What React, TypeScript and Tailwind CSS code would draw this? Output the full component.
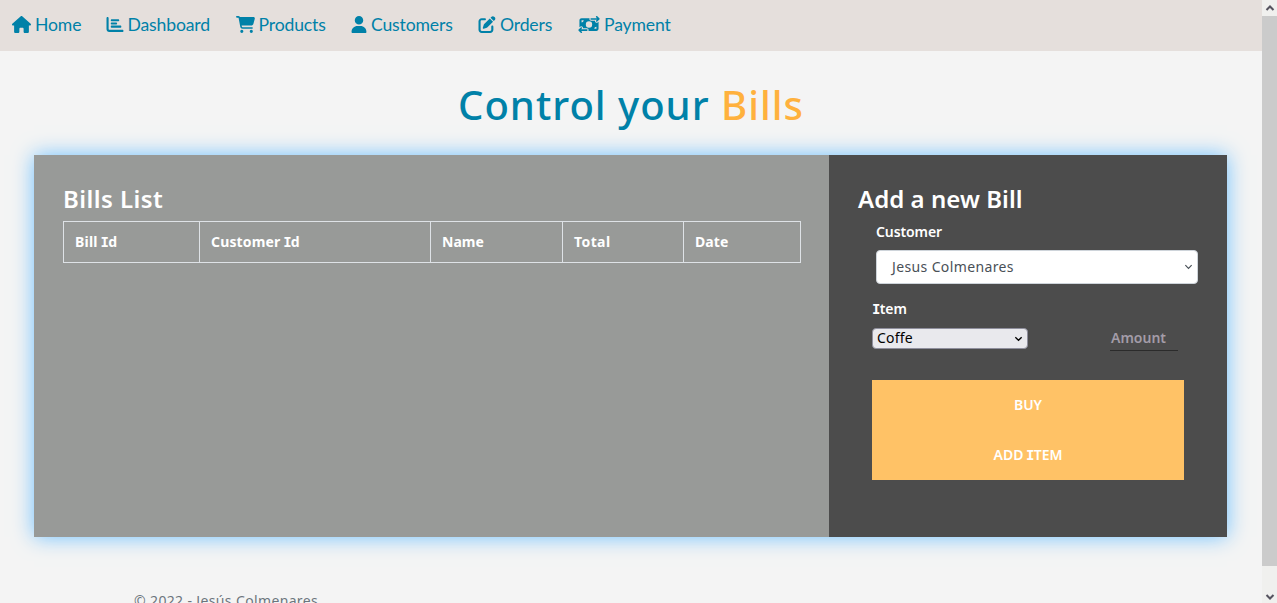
import type { ReactNode } from "react";
import type { IconType } from "react-icons";
import {
  FaHouse,
  FaChartBar,
  FaCartShopping,
  FaUser,
  FaPenToSquare,
  FaMoneyBillTransfer,
} from "react-icons/fa6";

const links: { label: string; icon: IconType; iconClass: string; itemClass: string }[] = [
  { label: "Home", icon: FaHouse, iconClass: "w-[19px]", itemClass: "w-[93.5px]" },
  { label: "Dashboard", icon: FaChartBar, iconClass: "w-[18px]", itemClass: "w-[130px]" },
  { label: "Products", icon: FaCartShopping, iconClass: "w-[19px]", itemClass: "w-[115.5px]" },
  { label: "Customers", icon: FaUser, iconClass: "w-[16px]", itemClass: "w-[127px]" },
  { label: "Orders", icon: FaPenToSquare, iconClass: "w-[18px]", itemClass: "w-[100px]" },
  { label: "Payment", icon: FaMoneyBillTransfer, iconClass: "w-[22px]", itemClass: "w-[92px]" },
];

// Capital I with serifs
function SerifI() {
  return <span className="-ml-px font-['DejaVu_Sans_Mono',monospace] leading-none tracking-[-0.8px]">I</span>;
}

const columns: { key: string; label: ReactNode; width: string }[] = [
  { key: "bill", label: <>Bill <SerifI />d</>, width: "w-[136px] tracking-[0.2px]" },
  { key: "customer", label: <>Customer <SerifI />d</>, width: "w-[231px] tracking-[0.15px]" },
  { key: "name", label: "Name", width: "w-[132px]" },
  { key: "total", label: "Total", width: "w-[121px] tracking-[0.4px]" },
  { key: "date", label: "Date", width: "w-[116px] tracking-[0.1px]" },
];

function Chevron({ className }: { className: string }) {
  return (
    <svg viewBox="0 0 10 6" className={className} fill="none" stroke="currentColor" aria-hidden="true">
      <path d="M1.5 1 5 4.5 8.5 1" />
    </svg>
  );
}

function Heading({ children, className }: { children: ReactNode; className: string }) {
  return <h2 className={`h-9 text-[24px] leading-9 font-semibold whitespace-nowrap ${className}`}>{children}</h2>;
}

export default function App() {
  return (
    <div className="flex h-[603px] w-full overflow-hidden bg-[#f4f4f4] font-['Noto_Sans',sans-serif]">
      <div className="flex min-w-0 flex-1 flex-col">
        <nav className="flex h-[51px] shrink-0 items-start bg-[#e5dfdc] pl-3 font-['Lato',sans-serif] text-[17.6px] tracking-[-0.15px] text-[#0081a8]">
          {links.map(({ label, icon: Icon, iconClass, itemClass }) => (
            <a key={label} className={`flex h-[49px] shrink-0 items-center gap-1 ${itemClass}`}>
              <Icon className={`h-[17px] shrink-0 ${iconClass}`} />
              <span className="pt-[2px]">{label}</span>
            </a>
          ))}
        </nav>

        <h1 className="mt-[29px] h-[50px] shrink-0 text-center text-[40px] leading-[50px] font-medium tracking-[1px] whitespace-nowrap text-[#0081a8]">
          Control your <span className="text-[#ffb13d]">Bills</span>
        </h1>

        <main className="mt-[25px] ml-[34px] flex h-[382px] w-[1193px] shrink-0 text-white shadow-[0_0_20px_0_#6fc1ff]">
          <section className="w-[795px] bg-[#989a98] pt-[26px] pl-[29px]">
            <Heading className="tracking-[0.45px]">Bills List</Heading>
            <div className="mt-1 flex h-[42px] w-[738px] border border-[#dee2e6] text-[14px] font-bold">
              {columns.map((c) => (
                <div
                  key={c.key}
                  className={`shrink-0 border-r border-[#dee2e6] pl-[11px] leading-[39px] last:border-r-0 ${c.width}`}
                >
                  {c.label}
                </div>
              ))}
            </div>
          </section>

          <section className="w-[398px] bg-[#4c4c4c] pt-[26px] pl-[29px]">
            <Heading className="tracking-[0.05px]">Add a new Bill</Heading>
            <div className="mt-[5px] ml-[18px] h-5 text-[14px] leading-5 font-semibold tracking-[-0.1px]">Customer</div>
            <div className="mt-[8px] ml-[18px] flex h-[34px] w-[322px] items-center justify-between rounded-[4px] border border-[#ced4da] bg-white pr-[4px] pl-[15px] text-[14px] tracking-[0.37px] text-[#495057]">
              <span className="pb-px">Jesus Colmenares</span>
              <Chevron className="h-[6px] w-[9px] stroke-[1.3]" />
            </div>
            <div className="mt-[15px] ml-[15px] h-5 text-[14px] leading-5 font-semibold">
              <SerifI />tem
            </div>
            <div className="mt-[9px] ml-[14px] flex h-[23px] w-[306px] items-start justify-between">
              <div className="flex h-[21px] w-[156px] items-center justify-between rounded-[4px] border border-[#8f8f9d] bg-[#e9e9ed] pr-[4px] pl-[4px] text-[14px] tracking-[0.2px] text-black">
                <span className="pb-[2px]">Coffe</span>
                <Chevron className="h-[6px] w-[9px] stroke-[1.5]" />
              </div>
              <div className="h-[23px] w-[68px] border-b border-[#2b2b2b] pl-px text-[14px] leading-[20px] font-semibold text-[#a39ca8]">
                Amount
              </div>
            </div>
            <div className="mt-[29px] ml-[14px] flex h-[100px] w-[312px] flex-col bg-[#ffc266] text-center text-[14px] leading-[50px] font-semibold">
              <button className="h-[50px]">BUY</button>
              <button className="h-[50px]">ADD <SerifI />TEM</button>
            </div>
          </section>
        </main>

        <footer className="mt-[53px] ml-[134px] h-5 shrink-0 text-[14px] leading-[21px] tracking-[0.36px] text-[#6c757d]">
          © 2022 - Jesús Colmenares
        </footer>
      </div>

      <div className="flex w-[15px] shrink-0 flex-col bg-[#f0f0ee] text-[#55535f]">
        <div className="flex h-4 items-center justify-center">
          <Chevron className="h-[6px] w-[10px] rotate-180 stroke-2" />
        </div>
        <div className="h-[550px] bg-[#cbcbcb]" />
        <div className="flex flex-1 items-end justify-center pb-[3px]">
          <Chevron className="h-[6px] w-[10px] stroke-2" />
        </div>
      </div>
    </div>
  );
}
